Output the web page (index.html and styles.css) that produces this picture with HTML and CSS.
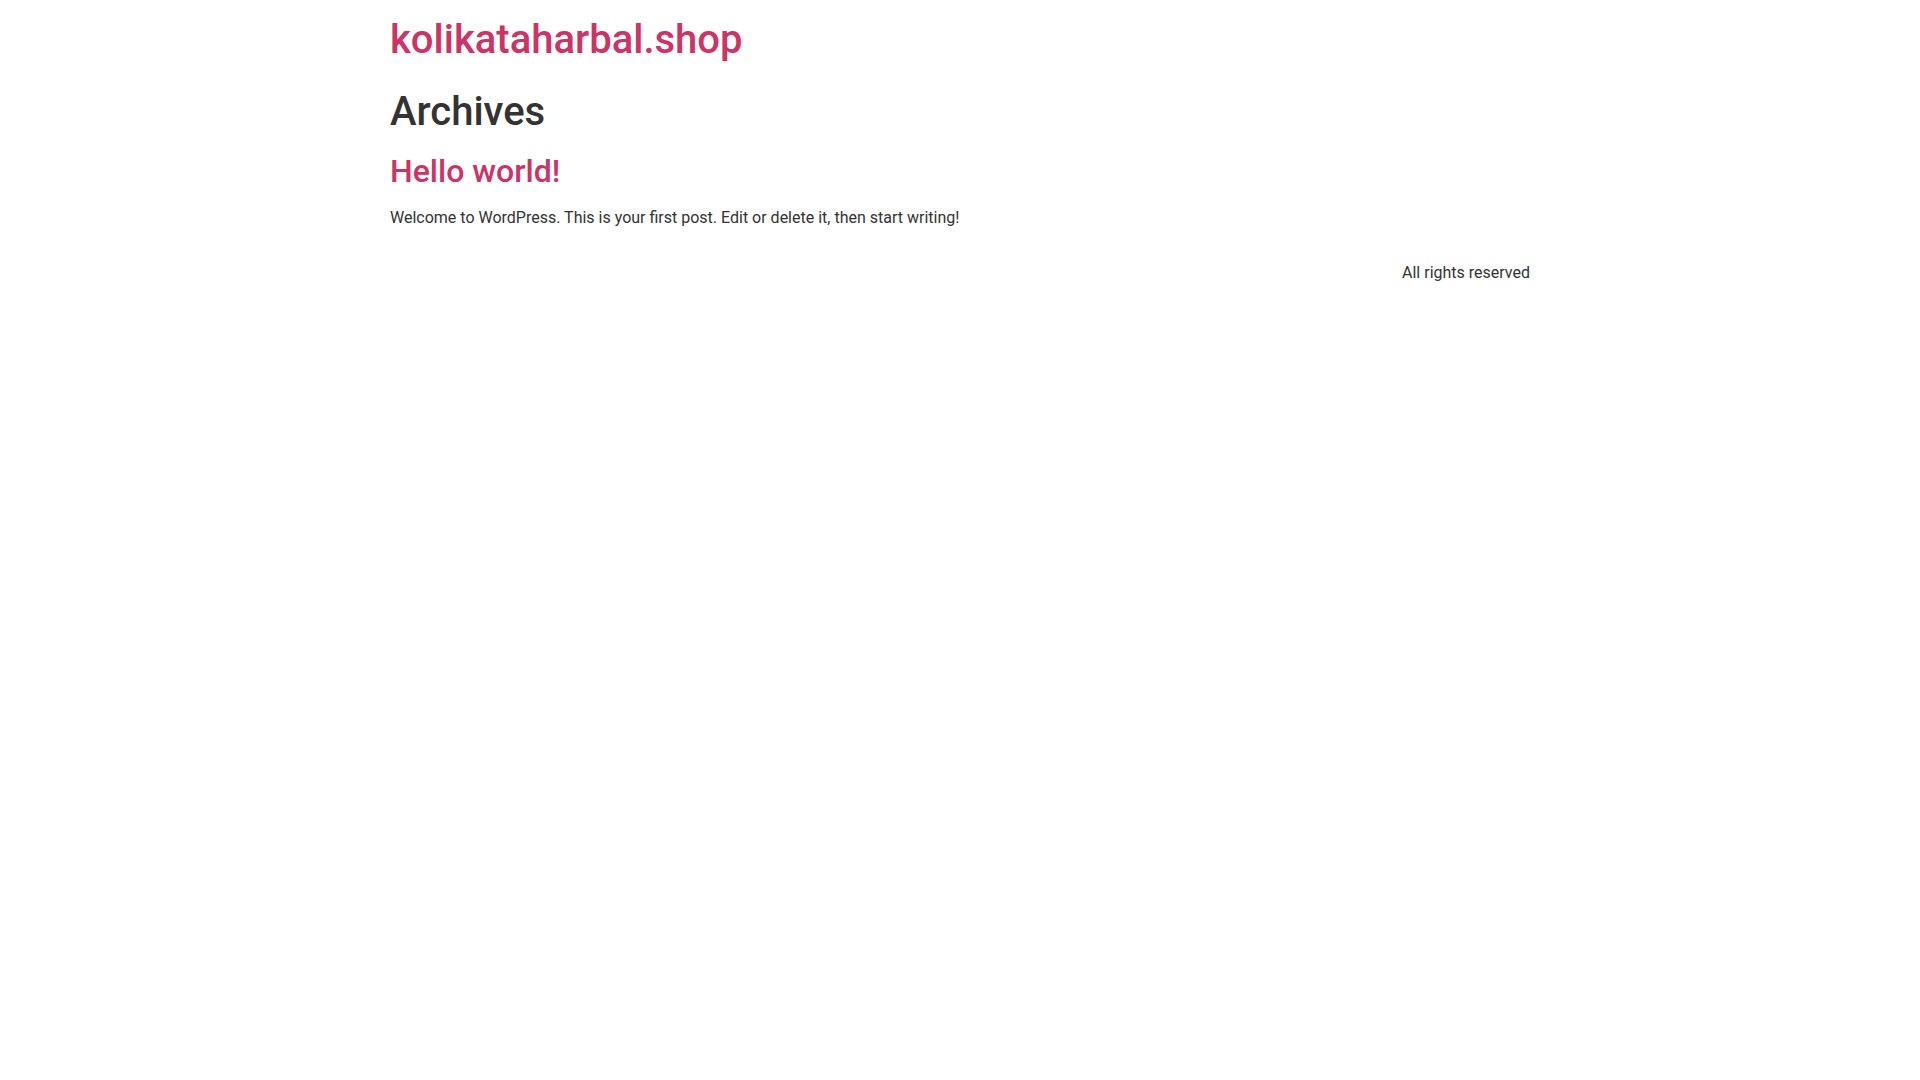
FILE: index.html
```html
<!DOCTYPE html>
<html lang="en">
<head>
<meta charset="utf-8">
<title>Archives – kolikataharbal.shop</title>
<link rel="stylesheet" href="styles.css">
</head>
<body>
<header class="site-header">
  <div class="site-branding">
    <h1 class="site-title"><a href="#">kolikataharbal.shop</a></h1>
  </div>
</header>
<main class="site-main">
  <header class="page-header">
    <h1 class="entry-title">Archives</h1>
  </header>
  <div class="page-content">
    <article class="post">
      <h2 class="entry-title"><a href="#">Hello world!</a></h2>
      <p>Welcome to WordPress. This is your first post. Edit or delete it, then start writing!</p>
    </article>
  </div>
</main>
<footer class="site-footer">
  <div class="copyright">
    <p>All rights reserved</p>
  </div>
</footer>
</body>
</html>
```
FILE: styles.css
```css
html, body {
  margin: 0;
  padding: 0;
}
body {
  font-family: Roboto, "Liberation Sans", sans-serif;
  font-size: 16px;
  font-weight: 400;
  line-height: 1.5;
  color: #333;
  background: #fff;
}
a {
  color: #c36;
  text-decoration: none;
}
h1, h2 {
  margin-top: 8px;
  margin-bottom: 16px;
  font-weight: 500;
  line-height: 1.2;
}
h1 { font-size: 40px; }
h2 { font-size: 32px; }
p {
  margin-top: 0;
  margin-bottom: 14.4px;
}
.site-header,
.site-main,
.site-footer {
  max-width: 1140px;
  margin: 0 auto;
}
.site-header {
  display: flex;
  justify-content: space-between;
  padding-top: 8px;
}
.site-title {
  margin-bottom: 16px;
}
.site-main {
  display: flow-root;
}
.page-header .entry-title {
  margin-top: 8px;
}
.site-footer {
  display: flex;
  justify-content: flex-end;
  padding-top: 16px;
}
.site-footer p {
  margin: 0;
}
```
